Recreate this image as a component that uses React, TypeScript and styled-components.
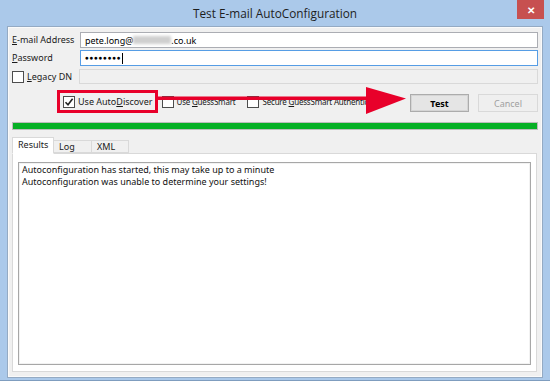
import styled, { createGlobalStyle } from 'styled-components';

const GlobalStyle = createGlobalStyle`
  html, body {
    margin: 0;
    padding: 0;
    background: #abc9ea;
  }
  body {
    font-family: 'Noto Sans', 'Open Sans', sans-serif;
    font-size: 9px;
    color: #000;
  }
`;

function Checkbox({ checked = false }: { checked?: boolean }) {
  return (
    <Box>
      {checked && (
        <svg width="10" height="10" viewBox="0 0 10 10">
          <path d="M1.5 5.2 L4 7.8 L8.6 1.8" fill="none" stroke="#222" strokeWidth="1.6" />
        </svg>
      )}
    </Box>
  );
}

export default function App() {
  return (
    <>
      <GlobalStyle />
      <Window>
        <TitleBar>
          <Title>Test E-mail AutoConfiguration</Title>
          <CloseButton>✕</CloseButton>
        </TitleBar>
        <Client>
          <FormGrid>
            <Label>
              <u>E</u>-mail Address
            </Label>
            <Field>
              pete.long@<Blurred />.co.uk
            </Field>
            <Label>
              <u>P</u>assword
            </Label>
            <Field $focused>
              <Dots>●●●●●●●●</Dots>
              <Caret />
            </Field>
            <CheckLabel>
              <Checkbox />
              <span>
                <u>L</u>egacy DN
              </span>
            </CheckLabel>
            <Field $disabled $short />
          </FormGrid>

          <OptionsRow>
            <Highlight>
              <CheckLabel>
                <Checkbox checked />
                <span>
                  Use Auto<u>D</u>iscover
                </span>
              </CheckLabel>
            </Highlight>
            <CheckLabel $gap={8} $compact>
              <Checkbox />
              <span>
                Use <u>G</u>uessSmart
              </span>
            </CheckLabel>
            <CheckLabel $compact>
              <Checkbox />
              <span>
                Secure <u>G</u>uessSmart Authentication
              </span>
            </CheckLabel>
            <Buttons>
              <Button $primary>Test</Button>
              <Button disabled>Cancel</Button>
            </Buttons>
            <Arrow width="252" height="30" viewBox="0 0 252 30">
              <rect x="0" y="9.5" width="214" height="3.5" fill="#e8002a" />
              <polygon points="209,0 249,11.5 209,27" fill="#e8002a" />
            </Arrow>
          </OptionsRow>

          <Progress />

          <TabStrip>
            <Tab $active $width={42}>Results</Tab>
            <Tab $width={39}>Log</Tab>
            <Tab $width={38}>XML</Tab>
          </TabStrip>
          <TabPanel>
            <Output>
              Autoconfiguration has started, this may take up to a minute
              <br />
              Autoconfiguration was unable to determine your settings!
            </Output>
          </TabPanel>
        </Client>
      </Window>
    </>
  );
}

const Window = styled.div`
  width: 550px;
  height: 381px;
  box-sizing: border-box;
  display: flex;
  flex-direction: column;
  background: #abc9ea;
  border-bottom: 1px solid #7f9dbf;
  overflow: hidden;
`;

const TitleBar = styled.div`
  position: relative;
  height: 26px;
  display: flex;
  align-items: center;
  justify-content: center;
`;

const Title = styled.div`
  font-family: 'Open Sans', 'Noto Sans', sans-serif;
  font-size: 11.8px;
  color: #1e1e1e;
  margin-top: -1px;
`;

const CloseButton = styled.div`
  position: absolute;
  top: 0;
  right: 6px;
  width: 27px;
  height: 19px;
  background: #c75050;
  color: #fff;
  font-size: 10px;
  font-weight: 700;
  display: flex;
  align-items: center;
  justify-content: center;
`;

const Client = styled.div`
  flex: 1;
  margin: 0 7px 2px;
  border: 1px solid #94aac3;
  box-shadow: inset 0 0 0 1px #fafafa;
  background: #f0f0f0;
  padding: 5px 4px 5px 4px;
  display: flex;
  flex-direction: column;
  min-width: 0;
`;

const FormGrid = styled.div`
  display: grid;
  grid-template-columns: 68px 1fr;
  grid-template-rows: 16px 16px 15px;
  row-gap: 2px;
  align-items: center;
  & > :nth-child(5),
  & > :nth-child(6) {
    margin-top: 2px;
  }
`;

const Label = styled.div`
  line-height: 14px;
  white-space: nowrap;
  color: #1a1a1a;
`;

const Field = styled.div<{ $focused?: boolean; $disabled?: boolean; $short?: boolean }>`
  height: ${({ $short }) => ($short ? '15px' : '16px')};
  box-sizing: border-box;
  display: flex;
  align-items: center;
  padding: 0 4px;
  background: ${({ $disabled }) => ($disabled ? '#f0f0f0' : '#fff')};
  border: 1px solid
    ${({ $focused, $disabled }) => ($focused ? '#569de5' : $disabled ? '#d9d9d9' : '#abadb3')};
  margin-left: ${({ $disabled }) => ($disabled ? '-1px' : '0')};
  white-space: nowrap;
`;

const Blurred = styled.span`
  display: inline-block;
  width: 38px;
  height: 8px;
  background: #cfcfcf;
  filter: blur(1.5px);
`;

const Dots = styled.span`
  font-size: 6.5px;
  letter-spacing: 0.6px;
  line-height: 1;
`;

const Caret = styled.span`
  width: 1px;
  height: 11px;
  background: #000;
  margin-left: 1px;
`;

const CheckLabel = styled.label<{ $gap?: number; $compact?: boolean }>`
  display: inline-flex;
  align-items: center;
  gap: 3px;
  white-space: nowrap;
  margin-right: ${({ $gap }) => $gap ?? 0}px;
  color: #1a1a1a;
  flex-shrink: 0;
  font-size: ${({ $compact }) => ($compact ? '8px' : '9px')};
  letter-spacing: ${({ $compact }) => ($compact ? '-0.2px' : '0')};
`;

const Box = styled.span`
  width: 12px;
  height: 12px;
  box-sizing: border-box;
  border: 1px solid #4d4d4d;
  background: #fff;
  display: inline-flex;
  align-items: center;
  justify-content: center;
`;

const OptionsRow = styled.div`
  position: relative;
  height: 23px;
  margin-top: 7px;
  display: flex;
  align-items: center;
  gap: 4px;
  padding-left: 45px;
`;

const Highlight = styled.div`
  height: 23px;
  box-sizing: border-box;
  border: 3px solid #e8002a;
  padding: 0 2px 0 3px;
  display: flex;
  align-items: center;
  flex-shrink: 0;
`;

const Buttons = styled.div`
  margin-left: auto;
  display: flex;
  gap: 9px;
  margin-top: 3px;
  flex-shrink: 0;
`;

const Button = styled.button<{ $primary?: boolean }>`
  width: ${({ $primary }) => ($primary ? '59px' : '60px')};
  height: 18px;
  padding: 0;
  font-family: 'Noto Sans', 'Open Sans', sans-serif;
  font-size: 9px;
  font-weight: ${({ $primary }) => ($primary ? 700 : 400)};
  color: #000;
  background: #e5e5e5;
  border: 1px solid #acacac;
  box-shadow: ${({ $primary }) => ($primary ? 'inset 0 0 0 1px #d5d5d5' : 'none')};
  &:disabled {
    color: #a0a0a0;
    background: #efefef;
    border-color: #d9d9d9;
  }
`;

const Arrow = styled.svg`
  position: absolute;
  left: 145px;
  top: -3px;
  pointer-events: none;
`;

const Progress = styled.div`
  margin-top: 9px;
  height: 8px;
  box-sizing: border-box;
  border: 1px solid #bcbcbc;
  background: #06b025;
`;

const TabStrip = styled.div`
  margin-top: 7px;
  height: 16px;
  display: flex;
  align-items: flex-end;
  position: relative;
  z-index: 1;
`;

const Tab = styled.div<{ $active?: boolean; $width: number }>`
  width: ${({ $width }) => $width}px;
  height: ${({ $active }) => ($active ? '17px' : '13px')};
  box-sizing: border-box;
  padding: ${({ $active }) => ($active ? '1px 0 0 5px' : '0 0 0 5px')};
  border: 1px solid #d9d9d9;
  border-bottom: ${({ $active }) => ($active ? '1px solid #fff' : '1px solid #d9d9d9')};
  margin-left: ${({ $active }) => ($active ? '0' : '-1px')};
  background: ${({ $active }) => ($active ? '#fff' : '#f0f0f0')};
  margin-bottom: ${({ $active }) => ($active ? '-1px' : '0')};
  line-height: 12px;
  color: #1a1a1a;
  white-space: nowrap;
`;

const TabPanel = styled.div`
  flex: 1;
  border: 1px solid #d9d9d9;
  background: #fff;
  padding: 8px 5px 6px 5px;
  display: flex;
  margin-right: 1px;
`;

const Output = styled.div`
  flex: 1;
  border: 1px solid #a7a7a7;
  box-shadow: inset 0 0 0 1px #f2f2f2;
  background: #fff;
  padding: 1px 3px;
  line-height: 12px;
  color: #111;
`;
